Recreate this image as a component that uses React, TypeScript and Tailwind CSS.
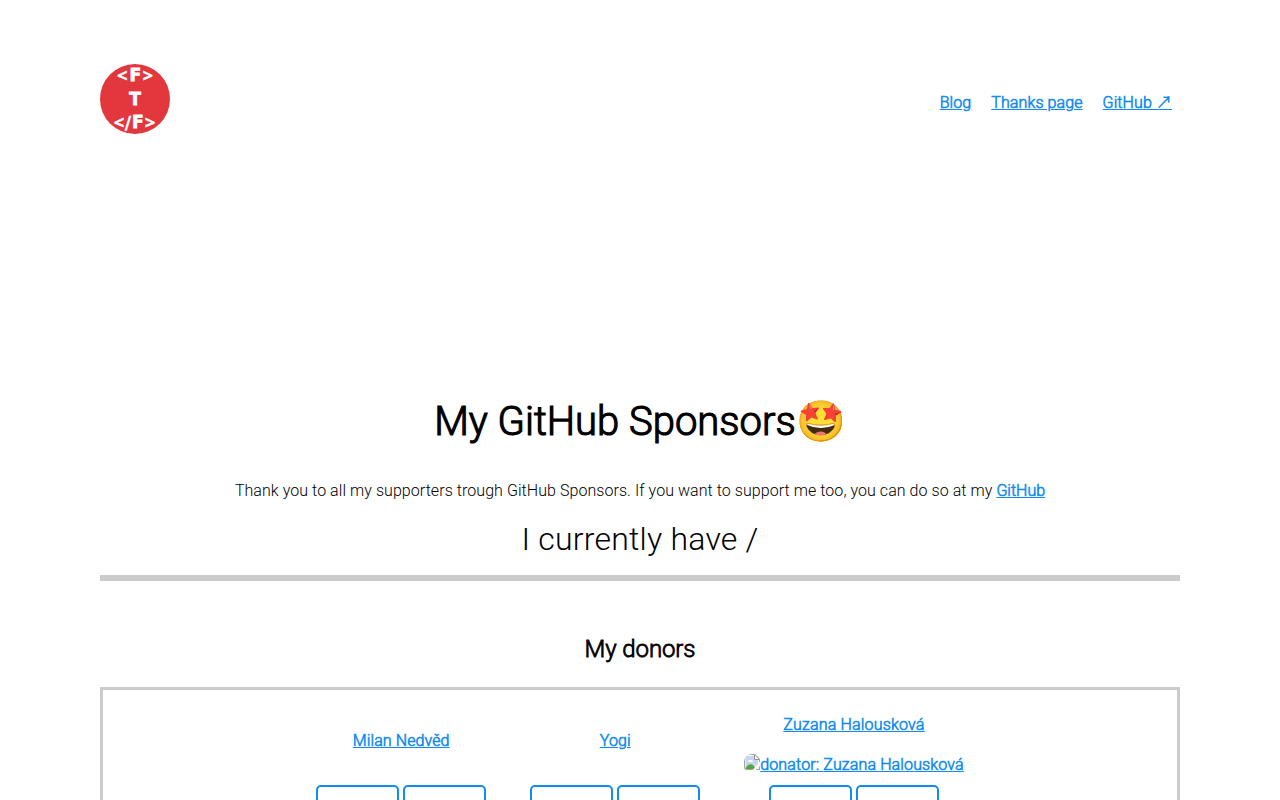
import { clsx } from "clsx";

type Donor = { name: string; image?: boolean };

const navLinks = ["Blog", "Thanks page", "GitHub ↗"];

const donors: Donor[] = [
  { name: "Milan Nedvěd" },
  { name: "Yogi" },
  { name: "Zuzana Halousková", image: true },
];

const link = "text-[#118bee] underline [-webkit-text-stroke:0.6px_#118bee]";

function Logo() {
  return (
    <svg width="70" height="70" viewBox="0 0 70 70" className="block">
      <circle cx="35" cy="35" r="35" fill="#e3373e" />
      <g fill="#fff" stroke="#fff" strokeWidth="0.8" fontFamily="DejaVu Sans, sans-serif" fontWeight="700" fontSize="17" textAnchor="middle">
        <text x="35.3" y="16.8">F</text>
        <text x="35" y="41">T</text>
        <text x="37.9" y="64">F</text>
      </g>
      <g fill="#fff" stroke="#fff" strokeWidth="0.3" fontFamily="Open Sans, sans-serif" fontWeight="700" fontSize="18.5" textAnchor="middle">
        <text x="22.3" y="18">{"<"}</text>
        <text x="47.7" y="18">{">"}</text>
        <text x="19" y="65">{"<"}</text>
        <text x="28" y="65" fontFamily="DejaVu Sans, sans-serif" fontSize="17.5">/</text>
        <text x="50" y="65">{">"}</text>
      </g>
    </svg>
  );
}

function MissingImage() {
  return (
    <svg width="16" height="16" viewBox="0 0 16 16" className="-mt-[7px] block rounded-tl-[8px] rounded-bl-[3px]">
      <path d="M0 0h11l5 5v11H0z" fill="#a3a3a3" />
      <path d="M1 1h9.5L15 5.5V15H1z" fill="#fff" />
      <path d="M1.5 2h8.5v4h4v8.5H1.5z" fill="#c6d5f7" />
      <path d="M4 7.5a2 2 0 0 1 3-1.5 2 2 0 0 1 2 2H4z" fill="#fff" />
      <path d="M1 15c2-4 5-6 8-4l3 4z" fill="#54a83a" />
      <path d="M10.5 1v4.5H15" fill="none" stroke="#8f8f8f" />
      <path d="M16 7.5L8.5 16H12l4-4z" fill="#fff" />
    </svg>
  );
}

function DonorCard({ name, image }: Donor) {
  return (
    <div className="flex flex-col items-center">
      <a href="#" className={clsx(link, "leading-6", image ? "mt-[23px] tracking-[0.19px]" : "mt-[39px] tracking-[0.1px]")}>
        {name}
      </a>
      {image && (
        <a href="#" className={clsx(link, "mt-4 flex h-6 items-center leading-6 tracking-[0.14px]")}>
          <MissingImage />
          <span>donator: {name}</span>
        </a>
      )}
      <div className={clsx("flex gap-1", image ? "mt-2" : "mt-8")}>
        <div className="h-[83px] w-[83px] rounded-[5px] border-2 border-[#118bee]" />
        <div className="h-[83px] w-[83px] rounded-[5px] border-2 border-[#118bee]" />
      </div>
    </div>
  );
}

export default function App() {
  return (
    <div className="h-screen overflow-hidden bg-white font-['Roboto','Noto_Sans_CJK_JP',sans-serif] text-base font-light text-black">
      <div className="mx-auto w-[1080px] pt-16">
        <header className="flex h-[70px] items-center justify-between">
          <a href="#">
            <Logo />
          </a>
          <nav className="flex gap-5 pt-[7px] pr-2 leading-6">
            {navLinks.map((label) => (
              <a key={label} href="#" className={clsx(link, "tracking-[0.1px]")}>
                {label}
              </a>
            ))}
          </nav>
        </header>

        <main className="text-center">
          <h1 className="mt-[258px] text-[40px] leading-[60px] [-webkit-text-stroke:1.15px_black]">
            My GitHub Sponsors🤩
          </h1>
          <p className="mt-[27px] leading-6 tracking-[0.06px]">
            Thank you to all my supporters trough GitHub Sponsors. If you want to support me too, you can do so at my{" "}
            <a href="#" className={clsx(link, "tracking-normal")}>
              GitHub
            </a>
          </p>
          <p className="mt-3 text-[32px] leading-[48px] tracking-[0.22px]">I currently have /</p>
          <div className="mt-3 h-[6px] bg-[#cbcbcb]" />

          <h2 className="mt-[50px] text-2xl leading-9 tracking-[-0.1px] [-webkit-text-stroke:0.8px_black]">My donors</h2>
          <section className="mt-5 flex h-[300px] justify-center gap-11 border-[3px] border-[#cbcbcb]">
            {donors.map((donor) => (
              <DonorCard key={donor.name} {...donor} />
            ))}
          </section>
        </main>
      </div>
    </div>
  );
}
